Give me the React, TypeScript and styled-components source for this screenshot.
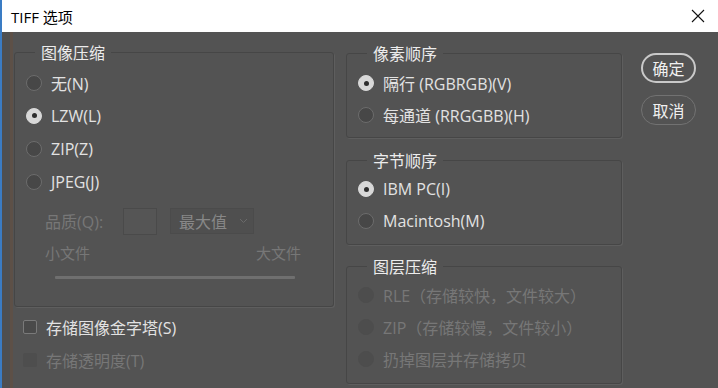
import React, { useState } from 'react';
import styled, { createGlobalStyle } from 'styled-components';

const GlobalStyle = createGlobalStyle`
  html, body {
    margin: 0;
    padding: 0;
    background: #535353;
  }
  body {
    font-family: "Open Sans", "Noto Sans CJK SC", sans-serif;
    overflow: hidden;
  }
`;

const Window = styled.div`
  width: 718px;
  height: 388px;
  display: flex;
  flex-direction: column;
  box-sizing: border-box;
  border-left: 2px solid #3a7cc4;
`;

const TitleBar = styled.div`
  height: 32px;
  flex: none;
  background: #ffffff;
  display: flex;
  align-items: center;
  justify-content: space-between;
  padding: 0 10px 0 9px;
  font-size: 15px;
  color: #000;
`;

const CloseButton = styled.button`
  width: 20px;
  height: 20px;
  border: none;
  background: none;
  padding: 0;
  display: flex;
  align-items: center;
  justify-content: center;
  cursor: pointer;
`;

const Body = styled.div`
  flex: 1;
  display: flex;
  align-items: flex-start;
  padding: 20px 0 0 12px;
  background: linear-gradient(
    to right,
    #4f4f4f 0px,
    #4f4f4f 8px,
    #5d5047 8px,
    #5d5047 11px,
    #535353 11px
  );
`;

const Column = styled.div<{ $width: number; $shift?: number }>`
  width: ${(p) => p.$width}px;
  margin: ${(p) => p.$shift ?? 0}px 0 0 0;
  display: flex;
  flex-direction: column;
  flex: none;
`;

const Group = styled.div<{ $top: number; $bottom: number }>`
  position: relative;
  border: 1px solid #464646;
  box-shadow: 1px 1px 0 #5e5e5e;
  border-radius: 3px;
  padding: ${(p) => p.$top}px 0 ${(p) => p.$bottom}px 0;
`;

const Legend = styled.span`
  position: absolute;
  top: -12px;
  left: 20px;
  padding: 0 6px;
  background: #535353;
  color: #ececec;
  font-size: 16px;
  line-height: 22px;
  font-family: "Noto Sans CJK SC", sans-serif;
`;

const Row = styled.label<{ $disabled?: boolean; $inset?: number; $h?: number }>`
  height: ${(p) => p.$h ?? 33}px;
  display: flex;
  align-items: center;
  padding-left: ${(p) => p.$inset ?? 11}px;
  gap: 9px;
  font-size: 16px;
  color: ${(p) => (p.$disabled ? '#777777' : '#e2e2e2')};
  cursor: ${(p) => (p.$disabled ? 'default' : 'pointer')};
  white-space: pre;
`;

const Radio = styled.span<{ $checked?: boolean; $disabled?: boolean }>`
  width: 16px;
  height: 16px;
  box-sizing: border-box;
  border-radius: 50%;
  flex: none;
  position: relative;
  background: ${(p) => (p.$checked ? '#d8d8d8' : p.$disabled ? '#4d4d4d' : '#474747')};
  border: 1.5px solid
    ${(p) => (p.$checked ? '#d8d8d8' : p.$disabled ? '#4d4d4d' : '#6c6c6c')};
  &::after {
    content: '';
    display: ${(p) => (p.$checked ? 'block' : 'none')};
    position: absolute;
    left: 50%;
    top: 50%;
    width: 5px;
    height: 5px;
    margin: -2.5px 0 0 -2.5px;
    border-radius: 50%;
    background: #2e2e2e;
  }
`;

const Checkbox = styled.span<{ $disabled?: boolean }>`
  width: 14px;
  height: 14px;
  box-sizing: border-box;
  border-radius: 2px;
  flex: none;
  background: ${(p) => (p.$disabled ? '#4e4e4e' : '#4a4a4a')};
  border: 1px solid ${(p) => (p.$disabled ? '#4e4e4e' : '#7a7a7a')};
`;

const QualityRow = styled.div`
  height: 32px;
  margin-top: 7px;
  display: flex;
  align-items: center;
  padding-left: 30px;
  font-size: 16px;
  color: #777777;
`;

const QualityLabel = styled.span`
  width: 78px;
  flex: none;
`;

const QualityInput = styled.div`
  width: 34px;
  height: 27px;
  box-sizing: border-box;
  border: 1px solid #4a4a4a;
  background: #555555;
`;

const Select = styled.div`
  width: 84px;
  height: 26px;
  box-sizing: border-box;
  margin-left: 13px;
  padding: 0 5px 0 8px;
  display: flex;
  align-items: center;
  justify-content: space-between;
  border: 1px solid #4b4b4b;
  background: #4f4f4f;
  color: #888888;
  font-size: 16px;
  font-family: "Noto Sans CJK SC", sans-serif;
`;

const SizeLabels = styled.div`
  height: 30px;
  display: flex;
  align-items: center;
  justify-content: space-between;
  padding: 0 32px 0 30px;
  font-size: 15px;
  color: #777777;
  font-family: "Noto Sans CJK SC", sans-serif;
`;

const Track = styled.div`
  height: 3px;
  margin: 9px 38px 0 40px;
  background: #6f6f6f;
  border-radius: 1px;
`;

const BelowGroup = styled.div`
  margin-top: 3px;
  display: flex;
  flex-direction: column;
`;

const GroupGap = styled.div<{ $h: number }>`
  height: ${(p) => p.$h}px;
  flex: none;
`;

const Buttons = styled.div`
  margin: 1px 0 0 19px;
  display: flex;
  flex-direction: column;
  gap: 12px;
`;

const PillButton = styled.button<{ $primary?: boolean }>`
  width: 55px;
  height: 30px;
  box-sizing: border-box;
  border-radius: 15px;
  border: ${(p) => (p.$primary ? '2px solid #c9c9c9' : '1.5px solid #727272')};
  background: transparent;
  color: #f0f0f0;
  font-size: 16px;
  font-family: "Noto Sans CJK SC", sans-serif;
  padding: 0;
  cursor: pointer;
`;

type Opt = { label: string; disabled?: boolean };

const RadioList: React.FC<{
  options: Opt[];
  value: number;
  onChange: (i: number) => void;
  rowHeight?: number;
}> = ({ options, value, onChange, rowHeight }) => (
  <>
    {options.map((o, i) => (
      <Row
        key={o.label}
        $disabled={o.disabled}
        $h={rowHeight}
        onClick={() => !o.disabled && onChange(i)}
      >
        <Radio $checked={value === i} $disabled={o.disabled} />
        {o.label}
      </Row>
    ))}
  </>
);

export default function App() {
  const [compression, setCompression] = useState(1);
  const [pixelOrder, setPixelOrder] = useState(0);
  const [byteOrder, setByteOrder] = useState(0);
  const [pyramid, setPyramid] = useState(false);

  return (
    <>
      <GlobalStyle />
      <Window>
        <TitleBar>
          <span>TIFF 选项</span>
          <CloseButton aria-label="close">
            <svg width="14" height="14" viewBox="0 0 14 14">
              <path d="M1 1 L13 13 M13 1 L1 13" stroke="#111" strokeWidth="1.1" />
            </svg>
          </CloseButton>
        </TitleBar>
        <Body>
          <Column $width={320}>
            <Group $top={13} $bottom={0}>
              <Legend>图像压缩</Legend>
              <RadioList
                value={compression}
                onChange={setCompression}
                options={[
                  { label: '无(N)' },
                  { label: 'LZW(L)' },
                  { label: 'ZIP(Z)' },
                  { label: 'JPEG(J)' },
                ]}
              />
              <QualityRow>
                <QualityLabel>品质(Q):</QualityLabel>
                <QualityInput />
                <Select>
                  最大值
                  <svg width="9" height="6" viewBox="0 0 9 6">
                    <path d="M1 1 L4.5 4.5 L8 1" stroke="#6a6a6a" fill="none" strokeWidth="1" />
                  </svg>
                </Select>
              </QualityRow>
              <SizeLabels>
                <span>小文件</span>
                <span>大文件</span>
              </SizeLabels>
              <Track />
              <GroupGap $h={27} />
            </Group>
            <BelowGroup>
              <Row $inset={9} onClick={() => setPyramid(!pyramid)}>
                <Checkbox />
                存储图像金字塔(S)
              </Row>
              <Row $inset={9} $disabled>
                <Checkbox $disabled />
                存储透明度(T)
              </Row>
            </BelowGroup>
          </Column>
          <Column $width={276} $shift={1} style={{ marginLeft: 12 }}>
            <Group $top={13} $bottom={6}>
              <Legend>像素顺序</Legend>
              <RadioList
                rowHeight={32}
                value={pixelOrder}
                onChange={setPixelOrder}
                options={[
                  { label: '隔行 (RGBRGB)(V)' },
                  { label: '每通道 (RRGGBB)(H)' },
                ]}
              />
            </Group>
            <GroupGap $h={22} />
            <Group $top={12} $bottom={7}>
              <Legend>字节顺序</Legend>
              <RadioList
                rowHeight={32}
                value={byteOrder}
                onChange={setByteOrder}
                options={[{ label: 'IBM PC(I)' }, { label: 'Macintosh(M)' }]}
              />
            </Group>
            <GroupGap $h={21} />
            <Group $top={12} $bottom={8}>
              <Legend>图层压缩</Legend>
              <RadioList
                rowHeight={32}
                value={-1}
                onChange={() => undefined}
                options={[
                  { label: 'RLE（存储较快，文件较大）', disabled: true },
                  { label: 'ZIP（存储较慢，文件较小）', disabled: true },
                  { label: '扔掉图层并存储拷贝', disabled: true },
                ]}
              />
            </Group>
          </Column>
          <Buttons>
            <PillButton $primary>确定</PillButton>
            <PillButton>取消</PillButton>
          </Buttons>
        </Body>
      </Window>
    </>
  );
}
